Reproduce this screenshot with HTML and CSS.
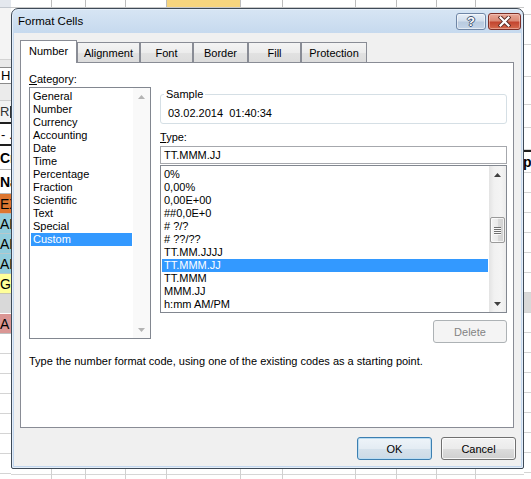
FILE: index.html
```html
<!DOCTYPE html>
<html>
<head>
<meta charset="utf-8">
<title>Format Cells</title>
<link rel="stylesheet" href="styles.css">
</head>
<body>
<div class="sheet">
  <div class="left-col">
    <div class="lc lc-hdr"></div>
    <div class="lc lc-ribbon"></div>
    <div class="lc lc-gap"></div>
    <div class="lc lc-hbox"><span>H</span></div>
    <div class="lc lc-gap2"></div>
    <div class="lc lc-rbox"><span>R</span><span class="bar"></span></div>
    <div class="lc lc-thick"></div>
    <div class="lc lc-dash"><span>- .</span></div>
    <div class="lc lc-thick"></div>
    <div class="lc lc-bold lc-cr"><span>Cr</span></div>
    <div class="lc lc-bold lc-na"><span>Na</span></div>
    <div class="lc lc-cell lc-orange"><span>EX</span></div>
    <div class="lc lc-cell lc-blue"><span>AB</span></div>
    <div class="lc lc-cell lc-blue"><span>AB</span></div>
    <div class="lc lc-cell lc-blue"><span>AB</span></div>
    <div class="lc lc-cell lc-yellow"><span>GE</span></div>
    <div class="lc lc-cell lc-gray"></div>
    <div class="lc lc-cell lc-pink"><span>A</span></div>
    <div class="lc lc-cell"></div>
    <div class="lc lc-cell"></div>
    <div class="lc lc-cell"></div>
    <div class="lc lc-cell"></div>
    <div class="lc lc-cell"></div>
    <div class="lc lc-cell"></div>
    <div class="lc lc-cell"></div>
    <div class="lc lc-cell"></div>
  </div>

  <div class="mid-col">
    <div class="grid-row top-row">
      <div class="gc w41"></div><div class="gc w34"></div><div class="gc w40"></div><div class="gc w41"></div>
      <div class="gc w74 gc-sel"></div><div class="gc w42"></div><div class="gc w73"></div><div class="gc w41"></div>
      <div class="gc w40"></div><div class="gc w39"></div><div class="gc gc-rest"></div>
    </div>
    <div class="grid-row bottom-row">
      <div class="gc w41"></div><div class="gc w34"></div><div class="gc w40"></div><div class="gc w41"></div>
      <div class="gc w74"></div><div class="gc w42"></div><div class="gc w73"></div><div class="gc w41"></div>
      <div class="gc w40"></div><div class="gc w39"></div><div class="gc gc-rest"></div>
    </div>
  </div>

  <div class="right-col">
    <div class="rc h15"></div>
    <div class="rc h30"></div>
    <div class="rc h32"></div>
    <div class="rc h28"></div>
    <div class="rc h23"></div>
    <div class="rc h22"></div>
    <div class="rc rc-thick"></div>
    <div class="rc h21 rc-bold"><span>pl</span></div>
    <div class="rc h20"></div>
    <div class="rc h20"></div>
    <div class="rc h20"></div>
    <div class="rc h20"></div>
    <div class="rc h20"></div>
    <div class="rc h20"></div>
    <div class="rc h20 rc-gray"></div>
    <div class="rc h20"></div>
    <div class="rc h20"></div>
    <div class="rc h20"></div>
    <div class="rc h20"></div>
    <div class="rc h20"></div>
    <div class="rc h20"></div>
    <div class="rc h20"></div>
    <div class="rc h20"></div>
    <div class="rc h20"></div>
  </div>

  <div class="dialog">
    <div class="titlebar">
      <span class="title">Format Cells</span>
      <div class="caption-btns">
        <div class="cap-btn cap-help"><span>?</span></div>
        <div class="cap-btn cap-close">
          <svg width="13" height="11" viewBox="0 0 13 11">
            <path d="M2.5 1.5 L10.5 9.5 M10.5 1.5 L2.5 9.5" stroke="#5a2a24" stroke-width="4" stroke-linecap="square" fill="none"/>
            <path d="M2.5 1.5 L10.5 9.5 M10.5 1.5 L2.5 9.5" stroke="#ffffff" stroke-width="2.2" stroke-linecap="square" fill="none"/>
          </svg>
        </div>
      </div>
    </div>

    <div class="client">
      <div class="tabs">
        <div class="tab tab-active t-number">Number</div>
        <div class="tab t-align">Alignment</div>
        <div class="tab t-font">Font</div>
        <div class="tab t-border">Border</div>
        <div class="tab t-fill">Fill</div>
        <div class="tab t-prot">Protection</div>
      </div>

      <div class="pane">
        <div class="pane-row">
          <div class="cat-col">
            <div class="label"><u>C</u>ategory:</div>
            <div class="listbox cat-list">
              <div class="items">
                <div class="item">General</div>
                <div class="item">Number</div>
                <div class="item">Currency</div>
                <div class="item">Accounting</div>
                <div class="item">Date</div>
                <div class="item">Time</div>
                <div class="item">Percentage</div>
                <div class="item">Fraction</div>
                <div class="item">Scientific</div>
                <div class="item">Text</div>
                <div class="item">Special</div>
                <div class="item item-sel">Custom</div>
              </div>
              <div class="vscroll vscroll-off">
                <div class="sb-btn">
                  <svg width="7" height="4" viewBox="0 0 7 4"><path d="M0 4 L3.5 0 L7 4 Z" fill="#b4b4b4"/></svg>
                </div>
                <div class="sb-track"></div>
                <div class="sb-btn">
                  <svg width="7" height="4" viewBox="0 0 7 4"><path d="M0 0 L7 0 L3.5 4 Z" fill="#b4b4b4"/></svg>
                </div>
              </div>
            </div>
          </div>

          <div class="type-col">
            <div class="sample">
              <span class="legend">Sample</span>
              <div class="sample-val">03.02.2014&nbsp; 01:40:34</div>
            </div>
            <div class="label type-label"><u>T</u>ype:</div>
            <div class="textbox">TT.MMM.JJ</div>
            <div class="listbox type-list">
              <div class="items">
                <div class="item">0%</div>
                <div class="item">0,00%</div>
                <div class="item">0,00E+00</div>
                <div class="item">##0,0E+0</div>
                <div class="item"># ?/?</div>
                <div class="item"># ??/??</div>
                <div class="item">TT.MM.JJJJ</div>
                <div class="item item-sel">TT.MMM.JJ</div>
                <div class="item">TT.MMM</div>
                <div class="item">MMM.JJ</div>
                <div class="item">h:mm AM/PM</div>
              </div>
              <div class="vscroll">
                <div class="sb-btn">
                  <svg width="7" height="4" viewBox="0 0 7 4"><path d="M0 4 L3.5 0 L7 4 Z" fill="#404040"/></svg>
                </div>
                <div class="sb-track">
                  <div class="sb-thumb">
                    <span class="grip"></span><span class="grip"></span><span class="grip"></span><span class="grip"></span>
                  </div>
                </div>
                <div class="sb-btn">
                  <svg width="7" height="4" viewBox="0 0 7 4"><path d="M0 0 L7 0 L3.5 4 Z" fill="#404040"/></svg>
                </div>
              </div>
            </div>
            <div class="btn btn-disabled btn-delete">Delete</div>
          </div>
        </div>
        <p class="desc">Type the number format code, using one of the existing codes as a starting point.</p>
      </div>

      <div class="buttons">
        <div class="btn btn-default">OK</div>
        <div class="btn">Cancel</div>
      </div>
    </div>
  </div>
</div>
</body>
</html>
```

FILE: styles.css
```css
* { box-sizing: border-box; }
html, body { margin: 0; padding: 0; }
body {
  width: 531px;
  height: 479px;
  overflow: hidden;
  background: #ffffff;
  font-family: "Liberation Sans", Arial, sans-serif;
  font-size: 11px;
  color: #000;
}

/* ---------- spreadsheet behind ---------- */
.sheet {
  position: relative;
  width: 531px;
  height: 479px;
  display: flex;
  overflow: hidden;
}
.left-col {
  width: 11px;
  flex: none;
  display: flex;
  flex-direction: column;
  font-size: 14px;
  white-space: nowrap;
}
.lc {
  flex: none;
  display: flex;
  align-items: center;
  width: 11px;
}
.lc-hdr { height: 8px; background: #e4e8ee; border-bottom: 1px solid #c2c7ce; }
.lc-ribbon { height: 52px; background: #f4f4f4; border-bottom: 1px solid #d3d3d3; }
.lc-gap { height: 7px; background: #e9e9e9; }
.lc-hbox { height: 17px; background: #fff; border-top: 1px solid #8a8a8a; border-bottom: 1px solid #8a8a8a; font-size: 13px; padding-left: 1px; }
.lc-gap2 { height: 16px; background: #ebebeb; }
.lc-rbox { height: 22px; background: #f2f2f2; border-top: 1px solid #cfcfcf; font-size: 13px; color: #333; }
.lc-rbox .bar { width: 1px; height: 12px; background: #333; margin-left: 1px; flex: none; }
.lc-thick { height: 2px; background: #1e1e1e; }
.lc-dash { height: 20px; background: #fff; font-size: 13px; padding-left: 1px; }
.lc-bold { height: 24px; background: #fff; font-weight: bold; border-bottom: 1px solid #b9b9b9; }
.lc-cell { height: 20px; border-bottom: 1px solid #d4d4d4; background: #fff; font-size: 14px; }
.lc-orange { background: #dd7630; border-bottom-color: #b8b8b8; }
.lc-blue { background: #93cddd; border-bottom-color: #b8c8cc; }
.lc-yellow { background: #ffff99; border-bottom-color: #c8c8b0; }
.lc-gray { background: #d9d9d9; border-bottom-color: #ffffff; }
.lc-pink { background: #da9694; border-bottom-color: #c0c0c0; }

.mid-col {
  flex: 1;
  display: flex;
  flex-direction: column;
  justify-content: space-between;
}
.grid-row { display: flex; }
.top-row { height: 8px; background: #ffffff; border-bottom: 1px solid #c9c9c9; }
.bottom-row {
  height: 11px;
  background: linear-gradient(to bottom, #fff 0, #fff 6px, #d6d6d6 6px, #d6d6d6 7px, #fff 7px);
}
.gc { flex: none; height: 100%; border-right: 1px solid #d0d0d0; }
.top-row .gc { border-right-color: #bdbdbd; }
.gc-sel { background: #f7d57e; border-right-color: #c9a04a; }
.gc-rest { flex: 1; border-right: none; }
.w34 { width: 34px; } .w39 { width: 39px; } .w40 { width: 40px; } .w41 { width: 41px; }
.w42 { width: 42px; } .w73 { width: 73px; } .w74 { width: 74px; }

.right-col {
  width: 7px;
  flex: none;
  display: flex;
  flex-direction: column;
  white-space: nowrap;
}
.rc { flex: none; border-bottom: 1px solid #d4d4d4; display: flex; align-items: center; }
.h15 { height: 15px; } .h20 { height: 20px; } .h21 { height: 21px; } .h22 { height: 22px; }
.h23 { height: 23px; } .h28 { height: 28px; } .h30 { height: 30px; } .h32 { height: 32px; }
.rc-thick { height: 2px; background: #1e1e1e; border: none; }
.rc-bold { font-weight: bold; font-size: 14px; }
.rc-bold span { margin-left: -1px; }
.rc-gray { background: #d9d9d9; }

/* ---------- dialog window ---------- */
.dialog {
  position: absolute;
  left: 11px;
  top: 8px;
  width: 513px;
  height: 461px;
  border: 1px solid #3e4a57;
  border-radius: 7px 7px 2px 2px;
  background: linear-gradient(to bottom, #d7e5f4 0, #c6d9ee 24px, #c2d6ed 100%);
  padding: 0 2px 2px 2px;
  display: flex;
  flex-direction: column;
  box-shadow: inset 0 0 0 1px #e4eefa;
}
.titlebar {
  height: 24px;
  flex: none;
  display: flex;
  align-items: center;
  padding-left: 4px;
}
.title { font-size: 11.5px; color: #000; }
.caption-btns {
  margin-left: auto;
  align-self: flex-start;
  margin-top: 4px;
  display: flex;
  gap: 2px;
}
.cap-btn {
  height: 17px;
  border-radius: 3px;
  display: flex;
  align-items: center;
  justify-content: center;
}
.cap-help {
  width: 30px;
  border: 1px solid #6f86a6;
  background: linear-gradient(to bottom, #e6eef7 0, #d3dfed 45%, #b9cbe0 55%, #c3d4e8 100%);
  box-shadow: inset 0 0 0 1px rgba(255,255,255,0.55);
}
.cap-help span {
  font-weight: bold;
  font-size: 13px;
  color: #fff;
  line-height: 1;
  text-shadow: 1px 0 0 #3f5270, -1px 0 0 #3f5270, 0 1px 0 #3f5270, 0 -1px 0 #3f5270;
}
.cap-close {
  width: 33px;
  border: 1px solid #7d2f27;
  background: linear-gradient(to bottom, #e9a797 0, #db8a76 45%, #c3452f 55%, #d56a4e 100%);
  box-shadow: inset 0 0 0 1px rgba(255,220,210,0.45);
}

.client {
  flex: 1;
  background: #f0f0f0;
  padding: 7px 5px 6px 6px;
  display: flex;
  flex-direction: column;
}

/* tabs */
.tabs {
  height: 22px;
  display: flex;
  align-items: flex-end;
  flex: none;
}
.tab {
  height: 20px;
  border: 1px solid #898c95;
  border-bottom: none;
  background: linear-gradient(to bottom, #f4f4f4 0, #ececec 50%, #e2e2e2 51%, #dcdcdc 100%);
  display: flex;
  align-items: center;
  justify-content: center;
  font-size: 11px;
  color: #000;
}
.tab-active {
  height: 23px;
  background: #ffffff;
  margin-bottom: -1px;
  position: relative;
  z-index: 1;
  padding-bottom: 2px;
}
.t-number { width: 57px; }
.t-align { width: 63px; }
.t-font { width: 53px; }
.t-border { width: 55px; }
.t-fill { width: 53px; }
.t-prot { width: 66px; }

/* tab page */
.pane {
  width: 494px;
  height: 366px;
  flex: none;
  background: #ffffff;
  border: 1px solid #898c95;
  padding: 9px 6px 0 8px;
}
.pane-row {
  display: flex;
  gap: 9px;
  align-items: flex-start;
}
.cat-col { width: 122px; flex: none; display: flex; flex-direction: column; }
.label { line-height: 15px; height: 15px; }
.label u { text-decoration: underline; text-underline-offset: 1px; }

.listbox {
  border: 1px solid #828790;
  background: #fff;
  display: flex;
}
.cat-list { height: 252px; }
.items {
  flex: 1;
  padding: 2px 1px 0 1px;
  display: flex;
  flex-direction: column;
}
.item {
  height: 13px;
  line-height: 13px;
  padding-left: 2px;
  white-space: nowrap;
}
.item-sel { background: #3399ff; color: #fff; }

.vscroll {
  width: 17px;
  flex: none;
  display: flex;
  flex-direction: column;
  background: linear-gradient(to right, #e3e3e3 0, #f1f1f1 30%, #f4f4f4 70%, #ececec 100%);
}
.vscroll-off { background: #f9f9f9; }
.sb-btn {
  height: 17px;
  flex: none;
  display: flex;
  align-items: center;
  justify-content: center;
}
.sb-track {
  flex: 1;
  display: flex;
  flex-direction: column;
  align-items: center;
}
.sb-thumb {
  margin-top: 34px;
  width: 15px;
  height: 26px;
  border: 1px solid #9a9a9a;
  border-radius: 2px;
  background: linear-gradient(to right, #f3f3f3 0, #e9e9e9 50%, #d9d9d9 51%, #d2d2d2 100%);
  box-shadow: inset 0 0 0 1px rgba(255,255,255,0.7);
  display: flex;
  flex-direction: column;
  align-items: center;
  justify-content: center;
  gap: 1px;
}
.grip { width: 7px; height: 1px; background: #6f6f6f; box-shadow: 0 1px 0 #fafafa; }

.type-col { flex: 1; display: flex; flex-direction: column; }
.sample {
  margin-top: 22px;
  height: 30px;
  border: 1px solid #d5dfe5;
  border-radius: 3px;
  display: flex;
  flex-direction: column;
  align-items: flex-start;
}
.legend {
  margin: -8px 0 0 3px;
  padding: 0 2px;
  background: #fff;
  line-height: 14px;
  color: #000;
}
.sample-val {
  margin-top: 5px;
  padding-left: 7px;
  line-height: 14px;
}
.type-label { margin-top: 6px; line-height: 14px; height: 14px; }
.textbox {
  margin-top: 2px;
  height: 18px;
  border: 1px solid #a6a8ad;
  line-height: 16px;
  padding-left: 3px;
}
.type-list { margin-top: 1px; height: 148px; }

.btn {
  width: 75px;
  height: 23px;
  border: 1px solid #707070;
  border-radius: 3px;
  background: linear-gradient(to bottom, #f2f2f2 0, #ebebeb 50%, #dddddd 51%, #cfcfcf 100%);
  box-shadow: inset 0 0 0 1px rgba(255,255,255,0.8);
  display: flex;
  align-items: center;
  justify-content: center;
  font-size: 11px;
}
.btn-delete { margin-top: 7px; align-self: flex-end; width: 74px; }
.btn-disabled {
  border-color: #adb2b5;
  background: #f4f4f4;
  color: #838383;
  box-shadow: none;
}
.btn-default {
  border-color: #3c7fb1;
  background: linear-gradient(to bottom, #eef4f9 0, #e4ecf3 50%, #d6e2ec 51%, #ccdae6 100%);
  box-shadow: inset 0 0 0 1px #b9dcf2;
}
.desc {
  margin: 11px 0 0 0;
  line-height: 14px;
}

.buttons {
  margin-top: 9px;
  display: flex;
  justify-content: flex-end;
  gap: 9px;
}
```
